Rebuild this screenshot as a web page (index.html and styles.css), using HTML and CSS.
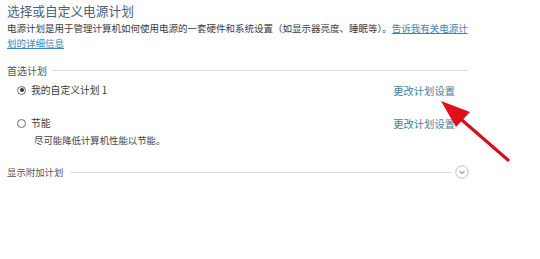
FILE: index.html
```html
<!DOCTYPE html>
<html lang="zh-CN">
<head>
    <meta charset="UTF-8">
    <title>电源选项</title>
    <link rel="stylesheet" href="styles.css">
</head>
<body>

<div class="page">
    <h1 class="title">选择或自定义电源计划</h1>
    <p class="intro">电源计划是用于管理计算机如何使用电源的一套硬件和系统设置（如显示器亮度、睡眠等）。<a href="#">告诉我有关电源计<br>划的详细信息</a></p>

    <div class="group-head">
        <span>首选计划</span>
        <div class="rule"></div>
    </div>

    <div class="plan first">
        <label><span class="radio checked"></span>我的自定义计划 1</label>
        <a href="#">更改计划设置</a>
    </div>

    <div class="plan second">
        <label><span class="radio"></span>节能</label>
        <a href="#">更改计划设置</a>
    </div>
    <p class="plan-desc">尽可能降低计算机性能以节能。</p>

    <div class="group-head more">
        <span>显示附加计划</span>
        <div class="rule"></div>
        <span class="expand">
            <svg width="14" height="14" viewBox="0 0 14 14">
                <circle cx="7" cy="7" r="6.2" fill="none" stroke="#bdbdbd" stroke-width="1"/>
                <path d="M4.5 6 L7 8.5 L9.5 6" fill="none" stroke="#9a9a9a" stroke-width="1.1"/>
            </svg>
        </span>
    </div>

    <!-- 红色箭头标注 -->
    <svg class="arrow" width="540" height="259" viewBox="0 0 540 259">
        <line x1="508" y1="160" x2="455" y2="114" stroke="#d4121b" stroke-width="3.2" stroke-linecap="round"/>
        <polygon points="441,101 470,112 456,127" fill="#e0101a"/>
    </svg>
</div>

</body>
</html>
```

FILE: styles.css
```css
body {
    margin: 0;
    background-color: #fff;
    font-family: "Noto Sans CJK SC", "Noto Sans", sans-serif;
    color: #444;
}

.page {
    position: relative;
    width: 540px;
    height: 259px;
    padding: 0.5px 0 0 7px;
    box-sizing: border-box;
}

.title {
    margin: 0;
    font-size: 12.7px;
    line-height: 19px;
    font-weight: normal;
    color: #4d6079;
}

.intro {
    margin: 1px 0 0 0;
    width: 470px;
    font-size: 9.5px;
    line-height: 15px;
    color: #3c3c3c;
}

.intro a {
    color: #3a85b8;
    text-decoration: underline;
}

.group-head {
    display: flex;
    align-items: center;
    width: 461px;
    height: 12px;
    margin-top: 13.5px;
    font-size: 10px;
    color: #555;
}

.group-head .rule {
    flex: 1;
    height: 1px;
    margin-left: 5px;
    background-color: #dcdcdc;
}

.group-head.more {
    width: 462px;
    height: 14px;
    margin-top: 19px;
    font-size: 9.4px;
}

.group-head.more .rule {
    margin-left: 7px;
    margin-right: 4px;
}

.expand {
    display: flex;
}

.plan {
    display: flex;
    justify-content: space-between;
    align-items: center;
    width: 438px;
    height: 14px;
    padding-left: 10px;
}

.plan.first {
    margin-top: 7px;
}

.plan.second {
    margin-top: 19px;
}

.plan label {
    display: flex;
    align-items: center;
    font-size: 9.8px;
    color: #3c3c3c;
}

.plan a {
    font-size: 10.3px;
    color: #3f7f9c;
    text-decoration: none;
}

.radio {
    width: 9px;
    height: 9px;
    margin-right: 5px;
    border: 1px solid #6a6a6a;
    border-radius: 50%;
    box-sizing: border-box;
    display: flex;
    align-items: center;
    justify-content: center;
}

.radio.checked::after {
    content: "";
    width: 4px;
    height: 4px;
    border-radius: 50%;
    background-color: #333;
}

.plan-desc {
    margin: 4px 0 0 27px;
    font-size: 9.4px;
    line-height: 12px;
    color: #444;
}

.arrow {
    position: absolute;
    left: 0;
    top: 0;
}
```
